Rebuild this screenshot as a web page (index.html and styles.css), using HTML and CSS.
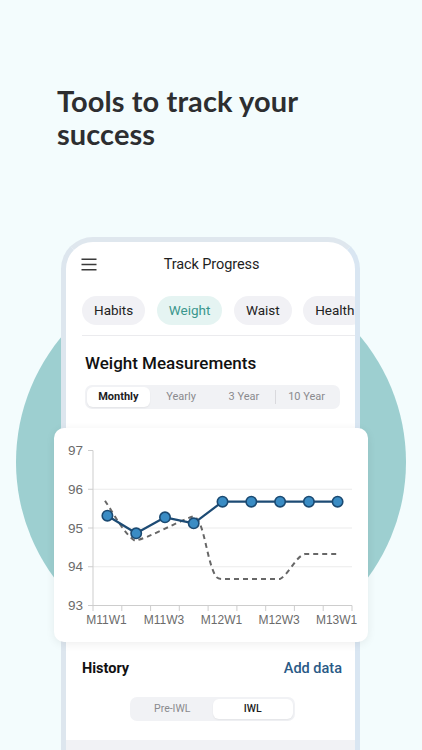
FILE: index.html
```html
<!DOCTYPE html>
<html lang="en">
<head>
<meta charset="utf-8">
<title>Track Progress</title>
<link rel="stylesheet" href="styles.css">
</head>
<body>
<main class="screen">
  <div class="circle"></div>
  <h1 class="headline">Tools to track your<br>success</h1>
  <div class="phone">
    <header class="app-bar">
      <svg class="menu-icon" width="16" height="13" viewBox="0 0 16 13">
        <path d="M0.5 1.2H15.5M0.5 6.5H15.5M0.5 11.8H15.5" stroke="#3a3a3a" stroke-width="1.6" fill="none"/>
      </svg>
      <span class="app-title">Track Progress</span>
      <span></span>
    </header>
    <nav class="tabs">
      <span class="pill">Habits</span>
      <span class="pill pill-active">Weight</span>
      <span class="pill">Waist</span>
      <span class="pill">Health</span>
    </nav>
    <div class="divider"></div>
    <section class="measure">
      <h2 class="section-title">Weight Measurements</h2>
      <div class="seg seg-wide">
        <span class="seg-item seg-on">Monthly</span>
        <span class="seg-item">Yearly</span>
        <span class="seg-item">3 Year</span>
        <span class="seg-sep"></span>
        <span class="seg-item">10 Year</span>
      </div>
    </section>
    <div class="chart-card">
      <svg class="chart" width="314" height="214" viewBox="0 0 314 214">
        <g class="grid">
          <line x1="39" y1="61.25" x2="298" y2="61.25"/>
          <line x1="39" y1="100" x2="298" y2="100"/>
          <line x1="39" y1="138.75" x2="298" y2="138.75"/>
        </g>
        <g class="axis">
          <line x1="39" y1="22.5" x2="39" y2="177.5"/>
          <line x1="39" y1="177.5" x2="298" y2="177.5"/>
          <line x1="34" y1="22.5" x2="39" y2="22.5"/>
          <line x1="34" y1="61.25" x2="39" y2="61.25"/>
          <line x1="34" y1="100" x2="39" y2="100"/>
          <line x1="34" y1="138.75" x2="39" y2="138.75"/>
          <line x1="34" y1="177.5" x2="39" y2="177.5"/>
          <line x1="39" y1="177.5" x2="39" y2="183"/>
          <line x1="67.8" y1="177.5" x2="67.8" y2="183"/>
          <line x1="96.6" y1="177.5" x2="96.6" y2="183"/>
          <line x1="125.3" y1="177.5" x2="125.3" y2="183"/>
          <line x1="154.1" y1="177.5" x2="154.1" y2="183"/>
          <line x1="182.9" y1="177.5" x2="182.9" y2="183"/>
          <line x1="211.7" y1="177.5" x2="211.7" y2="183"/>
          <line x1="240.4" y1="177.5" x2="240.4" y2="183"/>
          <line x1="269.2" y1="177.5" x2="269.2" y2="183"/>
          <line x1="298" y1="177.5" x2="298" y2="183"/>
        </g>
        <g class="ylabels">
          <text x="29" y="27">97</text>
          <text x="29" y="65.75">96</text>
          <text x="29" y="104.5">95</text>
          <text x="29" y="143.25">94</text>
          <text x="29" y="182">93</text>
        </g>
        <g class="xlabels">
          <text x="52.4" y="196">M11W1</text>
          <text x="110" y="196">M11W3</text>
          <text x="167.5" y="196">M12W1</text>
          <text x="225.1" y="196">M12W3</text>
          <text x="282.6" y="196">M13W1</text>
        </g>
        <path class="dash" d="M51,72.7 C60,86 70,106 81,112.7 C95,110 120,95 139.3,88.3 C150,90 152,130 161,147 C163,151 166,151 168,151 L226,151 C236,145 242,128 251,126 L286,126"/>
        <polyline class="series" points="53.4,87.7 82.2,105.3 111,89.3 139.7,95.3 168.5,73.7 197.3,73.7 226.1,73.7 254.9,73.7 283.6,73.7"/>
        <g class="dots">
          <circle cx="53.4" cy="87.7" r="5.2"/>
          <circle cx="82.2" cy="105.3" r="5.2"/>
          <circle cx="111" cy="89.3" r="5.2"/>
          <circle cx="139.7" cy="95.3" r="5.2"/>
          <circle cx="168.5" cy="73.7" r="5.2"/>
          <circle cx="197.3" cy="73.7" r="5.2"/>
          <circle cx="226.1" cy="73.7" r="5.2"/>
          <circle cx="254.9" cy="73.7" r="5.2"/>
          <circle cx="283.6" cy="73.7" r="5.2"/>
        </g>
      </svg>
    </div>
    <section class="history">
      <div class="history-row">
        <span class="history-title">History</span>
        <span class="add-link">Add data</span>
      </div>
      <div class="seg seg-narrow">
        <span class="seg-item">Pre-IWL</span>
        <span class="seg-item seg-on">IWL</span>
      </div>
    </section>
    <div class="list-bar"></div>
  </div>
</main>
</body>
</html>
```
FILE: styles.css
```css
html, body {
  margin: 0;
  padding: 0;
}
body {
  background: #f3fcfd;
  font-family: Roboto, "Liberation Sans", Arial, sans-serif;
}
.screen {
  position: relative;
  width: 422px;
  height: 750px;
  overflow: hidden;
  background: #f3fcfd;
}
.circle {
  position: absolute;
  left: 16px;
  top: 267px;
  width: 390px;
  height: 390px;
  border-radius: 50%;
  background: #9dcfd0;
}
.headline {
  position: relative;
  margin: 0;
  padding: 84px 0 0 57px;
  font-family: Lato, "Open Sans", sans-serif;
  font-weight: 700;
  font-size: 29px;
  line-height: 33px;
  color: #2d2e30;
  letter-spacing: 0.1px;
}
.phone {
  position: relative;
  box-sizing: border-box;
  margin: 87px 0 0 61px;
  width: 299px;
  height: 620px;
  border: 5px solid #d9e6f2;
  border-top-color: #dfe7ee;
  border-left-color: #dde6ee;
  border-bottom: none;
  border-radius: 32px 32px 0 0;
  background: #ffffff;
}
.app-bar {
  display: grid;
  grid-template-columns: 1fr auto 1fr;
  align-items: center;
  height: 44px;
  padding: 0 13px 0 15px;
}
.menu-icon {
  display: block;
}
.app-title {
  font-size: 14.5px;
  color: #1e1e1e;
  letter-spacing: -0.1px;
}
.tabs {
  display: flex;
  gap: 11.5px;
  margin-top: 10px;
  padding-left: 16px;
  overflow: hidden;
}
.pill {
  flex-shrink: 0;
  height: 29px;
  line-height: 29px;
  padding: 0 12px;
  border-radius: 15px;
  background: #f1f1f5;
  font-size: 13.5px;
  color: #222;
}
.pill-active {
  background: #e5f4f2;
  color: #3b978d;
}
.divider {
  height: 1px;
  margin: 10px 0 0 16px;
  background: #ebebee;
}
.measure {
  padding: 0 15px 0 19px;
}
.section-title {
  margin: 16px 0 0;
  font-size: 17px;
  font-weight: 500;
  line-height: 22px;
  color: #111;
}
.seg {
  display: flex;
  align-items: center;
  box-sizing: border-box;
  padding: 2px;
  background: #f1f2f5;
  border-radius: 7px;
  height: 24px;
}
.seg-wide {
  margin-top: 11px;
  width: 255px;
}
.seg-item {
  flex: 1;
  height: 20px;
  line-height: 20px;
  text-align: center;
  font-size: 11px;
  color: #8a8a8e;
  border-radius: 6px;
}
.seg-on {
  background: #ffffff;
  color: #1d1d1f;
  font-weight: 700;
  box-shadow: 0 1px 2px rgba(0, 0, 0, 0.06);
}
.seg-sep {
  flex: 0 0 1px;
  height: 14px;
  background: #d9d9dd;
  margin: 0 -0.5px;
}
.chart-card {
  position: relative;
  z-index: 2;
  height: 214px;
  margin: 19px -13px 0 -12px;
  background: #ffffff;
  border-radius: 10px;
  box-shadow: 0 2px 10px rgba(0, 0, 0, 0.07);
}
.chart {
  display: block;
  font-family: "Liberation Sans", Arial, sans-serif;
}
.grid line {
  stroke: #ebebeb;
  stroke-width: 1;
}
.axis line {
  stroke: #cdcdcd;
  stroke-width: 1;
}
.ylabels text {
  font-size: 13.5px;
  fill: #6b6b6b;
  text-anchor: end;
}
.xlabels text {
  font-size: 12px;
  fill: #6b6b6b;
  text-anchor: middle;
}
.dash {
  fill: none;
  stroke: #676767;
  stroke-width: 2;
  stroke-dasharray: 5 4;
}
.series {
  fill: none;
  stroke: #1d4b74;
  stroke-width: 2.2;
  stroke-linejoin: round;
}
.dots circle {
  fill: #3a8cc4;
  stroke: #1b4a72;
  stroke-width: 1.6;
}
.history {
  padding: 0 13px 0 16px;
}
.history-row {
  display: flex;
  justify-content: space-between;
  align-items: center;
  margin-top: 16px;
  height: 20px;
}
.history-title {
  font-size: 14.5px;
  font-weight: 700;
  color: #111;
}
.add-link {
  font-size: 14.5px;
  font-weight: 500;
  color: #2a5a86;
}
.seg-narrow {
  width: 165px;
  margin: 19px 0 0 48px;
}
.seg-narrow .seg-item {
  font-size: 10.5px;
}
.seg-narrow .seg-on {
  font-weight: 500;
}
.list-bar {
  height: 40px;
  margin-top: 19px;
  background: #f1f2f5;
}
```
